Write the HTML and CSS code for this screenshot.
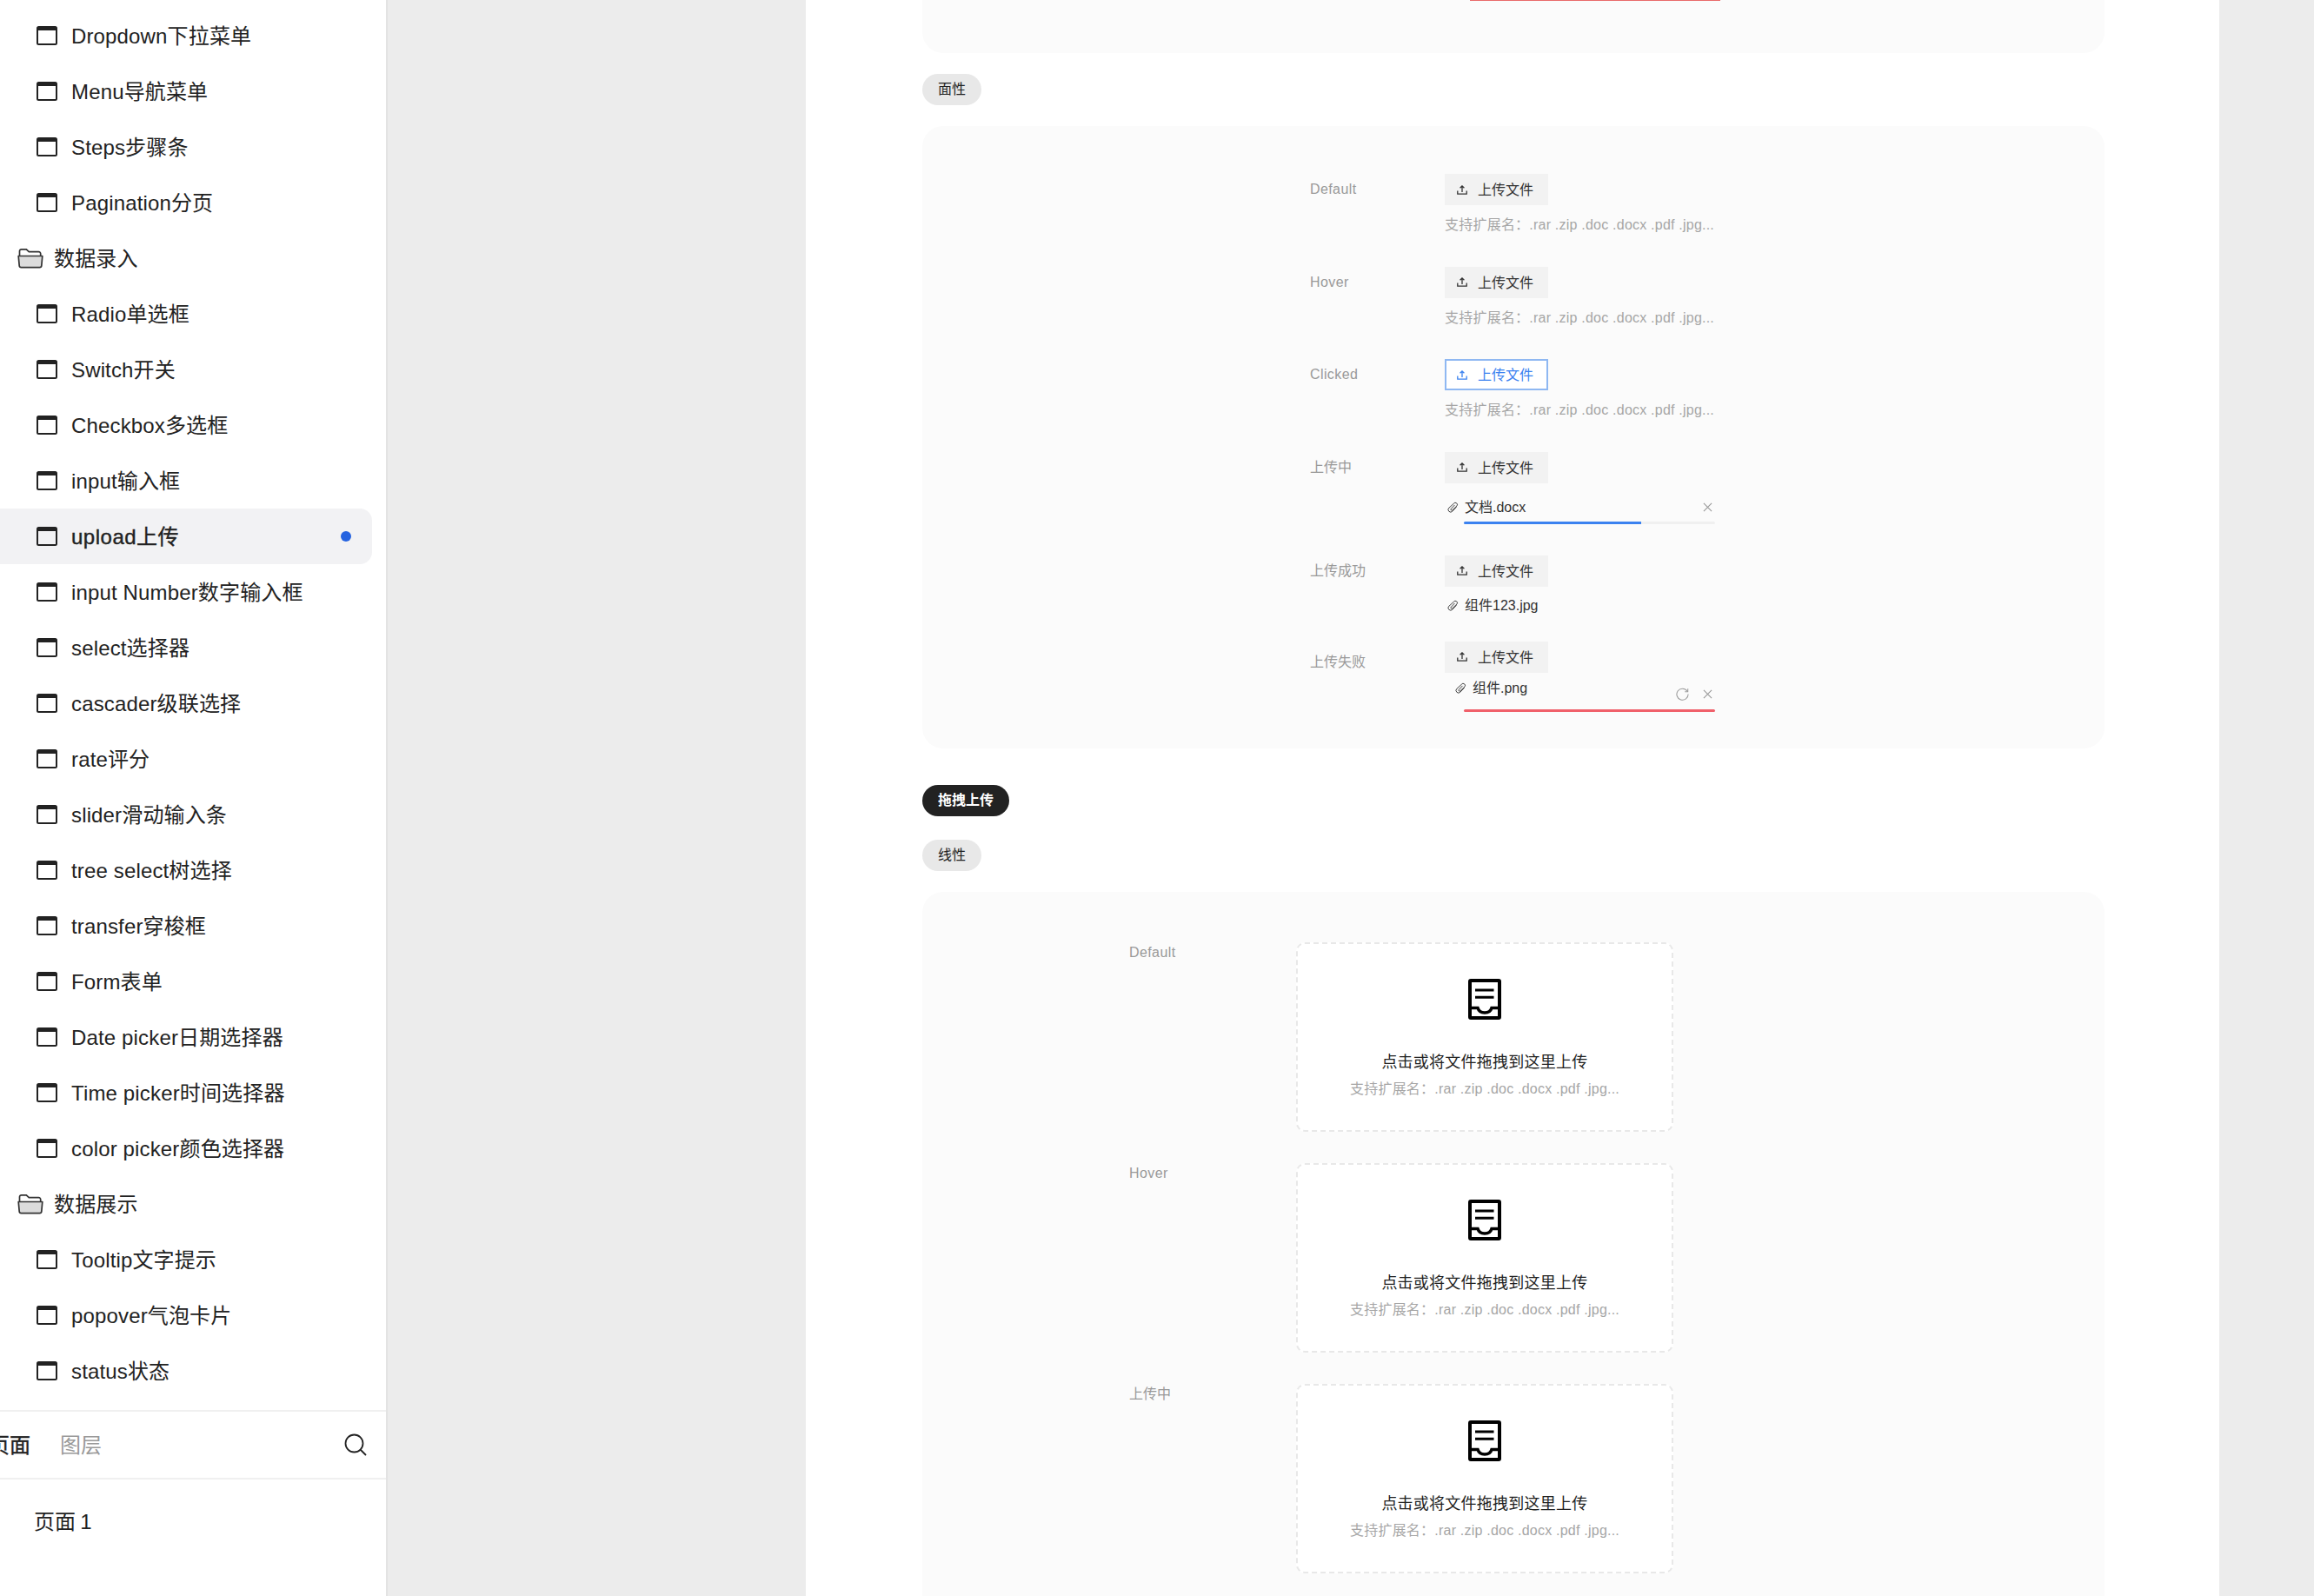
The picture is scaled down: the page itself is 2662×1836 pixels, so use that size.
FILE: index.html
```html
<!DOCTYPE html>
<html lang="zh-CN">
<head>
<meta charset="utf-8">
<title>upload上传</title>
<link rel="stylesheet" href="styles.css">
</head>
<body>
<svg class="sprite" aria-hidden="true">
  <symbol id="i-win" viewBox="0 0 24 22"><rect x="1" y="1" width="22" height="20" rx="1.5" fill="none" stroke="currentColor" stroke-width="2"/><rect x="1" y="1" width="22" height="4" fill="currentColor"/></symbol>
  <symbol id="i-folder" viewBox="0 0 30 24"><path d="M2.500 10V4a2.200 2.200 0 0 1 2.200-2.200h5.600l3 2.800h11.200a2.200 2.200 0 0 1 2.200 2.200V10" fill="none" stroke="currentColor" stroke-width="1.700"/><path d="M1.200 9.500h27.600l-1 11.200a2.200 2.200 0 0 1-2.200 2H4.400a2.200 2.200 0 0 1-2.200-2z" fill="#dcdcdc" stroke="currentColor" stroke-width="1.700" stroke-linejoin="round"/></symbol>
  <symbol id="i-up" viewBox="0 0 12 11"><path d="M.8 6.500v3.700h10.400V6.500M6 8V1M3.600 3.200 6 .9l2.400 2.300" fill="none" stroke="currentColor" stroke-width="1.300"/></symbol>
  <symbol id="i-clip" viewBox="0 0 14 14"><path d="M11.300 6.200 6.300 11.500a3 3 0 0 1-4.400-4.100L8 1.900a2.200 2.200 0 0 1 3.900 2.800L6.300 10a1.100 1.100 0 0 1-1.700-1.500L9.100 3.700" fill="none" stroke="currentColor" stroke-width="1"/></symbol>
  <symbol id="i-x" viewBox="0 0 12 12"><path d="M1 1l10 10M11 1 1 11" fill="none" stroke="currentColor" stroke-width="1.200"/></symbol>
  <symbol id="i-retry" viewBox="0 0 16 16"><path d="M13.800 4.300A7 7 0 1 0 15 8" fill="none" stroke="currentColor" stroke-width="1.100"/><path d="M14.600 1.400v3.600h-3.600" fill="none" stroke="currentColor" stroke-width="1.100"/></symbol>
  <symbol id="i-inbox" viewBox="0 0 38 47"><rect x="2" y="2" width="34" height="43" rx="1" fill="none" stroke="currentColor" stroke-width="4"/><path d="M8 13h21.500M8 21.300h21.500" stroke="currentColor" stroke-width="3" fill="none"/><path d="M3 33.500h8c1 3.500 4 5.500 8 5.500s7-2 8-5.500h8" stroke="currentColor" stroke-width="3.500" fill="none"/></symbol>
  <symbol id="i-search" viewBox="0 0 26 26"><circle cx="11.500" cy="11.500" r="10" fill="none" stroke="currentColor" stroke-width="1.800"/><path d="M18.500 18.500 25 25" stroke="currentColor" stroke-width="1.800" fill="none"/></symbol>
</svg>
<div class="app">
  <aside class="side">
    <ul class="tree">
      <li class="item"><svg class="ico-win"><use href="#i-win"/></svg>Dropdown下拉菜单</li>
      <li class="item"><svg class="ico-win"><use href="#i-win"/></svg>Menu导航菜单</li>
      <li class="item"><svg class="ico-win"><use href="#i-win"/></svg>Steps步骤条</li>
      <li class="item"><svg class="ico-win"><use href="#i-win"/></svg>Pagination分页</li>
      <li class="group"><svg class="ico-folder"><use href="#i-folder"/></svg>数据录入</li>
      <li class="item"><svg class="ico-win"><use href="#i-win"/></svg>Radio单选框</li>
      <li class="item"><svg class="ico-win"><use href="#i-win"/></svg>Switch开关</li>
      <li class="item"><svg class="ico-win"><use href="#i-win"/></svg>Checkbox多选框</li>
      <li class="item"><svg class="ico-win"><use href="#i-win"/></svg>input输入框</li>
      <li class="item active"><svg class="ico-win"><use href="#i-win"/></svg><span class="strong wide">upload上传</span><i class="dot"></i></li>
      <li class="item"><svg class="ico-win"><use href="#i-win"/></svg>input Number数字输入框</li>
      <li class="item"><svg class="ico-win"><use href="#i-win"/></svg>select选择器</li>
      <li class="item"><svg class="ico-win"><use href="#i-win"/></svg>cascader级联选择</li>
      <li class="item"><svg class="ico-win"><use href="#i-win"/></svg>rate评分</li>
      <li class="item"><svg class="ico-win"><use href="#i-win"/></svg>slider滑动输入条</li>
      <li class="item"><svg class="ico-win"><use href="#i-win"/></svg>tree select树选择</li>
      <li class="item"><svg class="ico-win"><use href="#i-win"/></svg>transfer穿梭框</li>
      <li class="item"><svg class="ico-win"><use href="#i-win"/></svg>Form表单</li>
      <li class="item"><svg class="ico-win"><use href="#i-win"/></svg>Date picker日期选择器</li>
      <li class="item"><svg class="ico-win"><use href="#i-win"/></svg>Time picker时间选择器</li>
      <li class="item"><svg class="ico-win"><use href="#i-win"/></svg>color picker颜色选择器</li>
      <li class="group"><svg class="ico-folder"><use href="#i-folder"/></svg>数据展示</li>
      <li class="item"><svg class="ico-win"><use href="#i-win"/></svg>Tooltip文字提示</li>
      <li class="item"><svg class="ico-win"><use href="#i-win"/></svg>popover气泡卡片</li>
      <li class="item"><svg class="ico-win"><use href="#i-win"/></svg>status状态</li>
    </ul>
    <div class="tabs">
      <span class="tab-on strong">页面</span>
      <span class="tab-off">图层</span>
      <svg class="ico-search"><use href="#i-search"/></svg>
    </div>
    <div class="page-row">页面 1</div>
  </aside>

  <main class="canvas">
    <div class="board">
      <section class="card stub"><div class="stub-line"></div></section>

      <div class="pill">面性</div>
      <section class="card card-up">
        <div class="up-row">
          <div class="up-label latin">Default</div>
          <div class="up-body">
            <div class="btn"><svg class="ico-up"><use href="#i-up"/></svg>上传文件</div>
            <div class="hint">支持扩展名：.rar .zip .doc .docx .pdf .jpg...</div>
          </div>
        </div>
        <div class="up-row">
          <div class="up-label latin">Hover</div>
          <div class="up-body">
            <div class="btn"><svg class="ico-up"><use href="#i-up"/></svg>上传文件</div>
            <div class="hint">支持扩展名：.rar .zip .doc .docx .pdf .jpg...</div>
          </div>
        </div>
        <div class="up-row">
          <div class="up-label latin">Clicked</div>
          <div class="up-body">
            <div class="btn btn-on"><svg class="ico-up"><use href="#i-up"/></svg>上传文件</div>
            <div class="hint">支持扩展名：.rar .zip .doc .docx .pdf .jpg...</div>
          </div>
        </div>
        <div class="up-row row-loading">
          <div class="up-label">上传中</div>
          <div class="up-body">
            <div class="btn"><svg class="ico-up"><use href="#i-up"/></svg>上传文件</div>
            <div class="file file-loading"><svg class="ico-clip"><use href="#i-clip"/></svg><span class="file-name">文档.docx</span><svg class="ico-x"><use href="#i-x"/></svg></div>
            <div class="track"><div class="fill" style="width:70.600%"></div></div>
          </div>
        </div>
        <div class="up-row row-done">
          <div class="up-label">上传成功</div>
          <div class="up-body">
            <div class="btn"><svg class="ico-up"><use href="#i-up"/></svg>上传文件</div>
            <div class="file file-done"><svg class="ico-clip"><use href="#i-clip"/></svg><span class="file-name">组件123.jpg</span></div>
          </div>
        </div>
        <div class="up-row row-fail">
          <div class="up-label label-fail">上传失败</div>
          <div class="up-body">
            <div class="btn"><svg class="ico-up"><use href="#i-up"/></svg>上传文件</div>
            <div class="file file-fail"><svg class="ico-clip"><use href="#i-clip"/></svg><span class="file-name">组件.png</span>
              <span class="actions"><svg class="ico-retry"><use href="#i-retry"/></svg><svg class="ico-x"><use href="#i-x"/></svg></span>
            </div>
            <div class="track track-fail"></div>
          </div>
        </div>
      </section>

      <div class="pill pill-dark">拖拽上传</div>
      <div class="pill pill-sub">线性</div>
      <section class="card card-drag">
        <div class="drag-row">
          <div class="drag-label latin">Default</div>
          <div class="zone">
            <svg class="ico-inbox"><use href="#i-inbox"/></svg>
            <div class="zone-title">点击或将文件拖拽到这里上传</div>
            <div class="hint hint-zone">支持扩展名：.rar .zip .doc .docx .pdf .jpg...</div>
          </div>
        </div>
        <div class="drag-row">
          <div class="drag-label latin">Hover</div>
          <div class="zone">
            <svg class="ico-inbox"><use href="#i-inbox"/></svg>
            <div class="zone-title">点击或将文件拖拽到这里上传</div>
            <div class="hint hint-zone">支持扩展名：.rar .zip .doc .docx .pdf .jpg...</div>
          </div>
        </div>
        <div class="drag-row">
          <div class="drag-label">上传中</div>
          <div class="zone">
            <svg class="ico-inbox"><use href="#i-inbox"/></svg>
            <div class="zone-title">点击或将文件拖拽到这里上传</div>
            <div class="hint hint-zone">支持扩展名：.rar .zip .doc .docx .pdf .jpg...</div>
          </div>
        </div>
      </section>
    </div>
  </main>
</div>
</body>
</html>
```

FILE: styles.css
```css
* { box-sizing: border-box; }
html, body { margin: 0; padding: 0; }
body {
  width: 2662px;
  height: 1836px;
  overflow: hidden;
  background: #ececec;
  color: #222;
  font-family: "Liberation Sans", "Noto Sans CJK SC", sans-serif;
}
.sprite { position: absolute; width: 0; height: 0; }
.app { display: flex; height: 1836px; }

/* sidebar */
.side {
  flex: none;
  width: 446px;
  height: 1836px;
  background: #fff;
  border-right: 2px solid #e3e3e3;
  display: flex;
  flex-direction: column;
  overflow: hidden;
}
.tree { list-style: none; margin: 0; padding: 9px 0 13px; }
.item, .group {
  display: flex;
  align-items: center;
  height: 64px;
  padding-bottom: 3px;
  font-size: 24px;
  letter-spacing: 0.15px;
  color: #222;
}
.item { padding-left: 42px; gap: 16px; }
.group { padding-left: 20px; gap: 12px; }
.ico-win { width: 24px; height: 22px; margin-top: 3px; color: #222; flex: none; }
.ico-folder { width: 30px; height: 24px; margin-top: 3px; color: #333; flex: none; }
.active {
  width: 428px;
  background: #f2f2f4;
  border-radius: 0 14px 14px 0;
  padding-right: 24px;
}
.strong { -webkit-text-stroke: 0.4px #222; }
.wide { letter-spacing: 0.5px; }
.dot {
  margin-left: auto;
  margin-top: 3px;
  width: 12px;
  height: 12px;
  border-radius: 50%;
  background: #2563e0;
}
.tabs {
  display: flex;
  align-items: center;
  height: 80px;
  padding: 0 22px 3px 0;
  border-top: 2px solid #f0f0f0;
  border-bottom: 2px solid #f0f0f0;
  font-size: 24px;
}
.tab-on { margin-left: -13px; }
.tab-off { margin-left: 34px; color: #999; }
.ico-search { margin-left: auto; margin-top: 3px; width: 26px; height: 26px; color: #222; }
.page-row { padding: 35px 0 0 39px; font-size: 24px; line-height: 28px; word-spacing: -1.5px; }

/* canvas + artboard */
.canvas { flex: 1; padding-left: 481px; overflow: hidden; }
.board {
  width: 1626px;
  height: 1836px;
  background: #fff;
  padding: 0 132px 0 134px;
  overflow: hidden;
}
.card { background: #fbfbfb; border-radius: 24px; }
.stub { height: 61px; border-radius: 0 0 24px 24px; }
.stub-line { width: 288px; height: 1px; margin-left: 630px; background: #e96a6a; }

.pill {
  display: inline-block;
  height: 36px;
  line-height: 36px;
  padding: 0 18px;
  border-radius: 18px;
  background: #e8e8e8;
  font-size: 16px;
  color: #222;
  vertical-align: top;
  margin: 24px 0;
}
.pill-dark {
  display: block;
  width: 100px;
  margin: 42px 0 0;
  background: #222;
  color: #fff;
  font-weight: 700;
}
.pill-sub { margin: 27px 0 24px; }

/* button-style uploads */
.card-up { padding: 55px 0 42px 446px; }
.up-row { display: flex; margin-bottom: 35.67px; }
.up-row.row-loading { margin-bottom: 36px; }
.up-row.row-done { margin-bottom: 29px; }
.up-row.row-fail { margin-bottom: 0; }
.up-label { width: 155px; flex: none; font-size: 16px; line-height: 36px; color: #999; }
.latin { letter-spacing: 0.4px; }
.label-fail { padding-top: 6px; }
.up-body { width: 311px; }
.btn {
  display: flex;
  align-items: center;
  gap: 12px;
  width: 119px;
  height: 36px;
  padding: 0 0 2px 14px;
  background: #f2f2f2;
  font-size: 16px;
  color: #333;
}
.btn-on {
  background: #fff;
  border: 2px solid #8fb8f2;
  padding: 0 0 2px 12px;
  color: #3b82f0;
}
.ico-up { width: 12px; height: 11px; margin-top: 2px; flex: none; color: inherit; }
.hint {
  margin-top: 11px;
  font-size: 16px;
  line-height: 24px;
  color: #a6a6a6;
  letter-spacing: 0.22px;
  white-space: nowrap;
}
.file {
  display: flex;
  align-items: center;
  font-size: 16px;
  line-height: 24px;
  color: #333;
}
.file-loading { height: 24px; margin-top: 16px; padding: 0 3px; }
.file-done { height: 24px; margin-top: 10px; padding-left: 3px; }
.file-fail { height: 36px; margin-top: 6px; padding: 0 3px 12px 12px; position: relative; }
.ico-clip { width: 13px; height: 14px; margin-right: 7px; flex: none; color: #333; }
.ico-x { width: 11px; height: 11px; flex: none; color: #999; margin-left: auto; }
.actions {
  position: absolute;
  right: 3px;
  top: 11px;
  display: flex;
  align-items: center;
  gap: 16px;
}
.ico-retry { width: 15px; height: 15px; color: #999; }
.track {
  height: 3px;
  margin: 4px 0 0 22px;
  background: #f0f0f0;
  border-radius: 2px;
}
.fill { height: 3px; background: #3b82f0; border-radius: 2px 0 0 2px; }
.track-fail { margin-top: 0; background: #f0606a; }

/* drag uploads */
.card-drag { padding: 58px 0 60px 238px; }
.drag-row { display: flex; margin-bottom: 36px; }
.drag-label { width: 192px; flex: none; font-size: 16px; line-height: 24px; color: #999; }
.zone {
  width: 434px;
  height: 218px;
  background: #fff;
  border: 2px dashed #e8e8e8;
  border-radius: 10px;
  padding-top: 40px;
  display: flex;
  flex-direction: column;
  align-items: center;
}
.ico-inbox { width: 38px; height: 47px; color: #000; flex: none; }
.zone-title { margin-top: 36px; font-size: 18px; line-height: 26px; letter-spacing: 0.25px; color: #222; }
.hint-zone { margin-top: 6px; }
```
